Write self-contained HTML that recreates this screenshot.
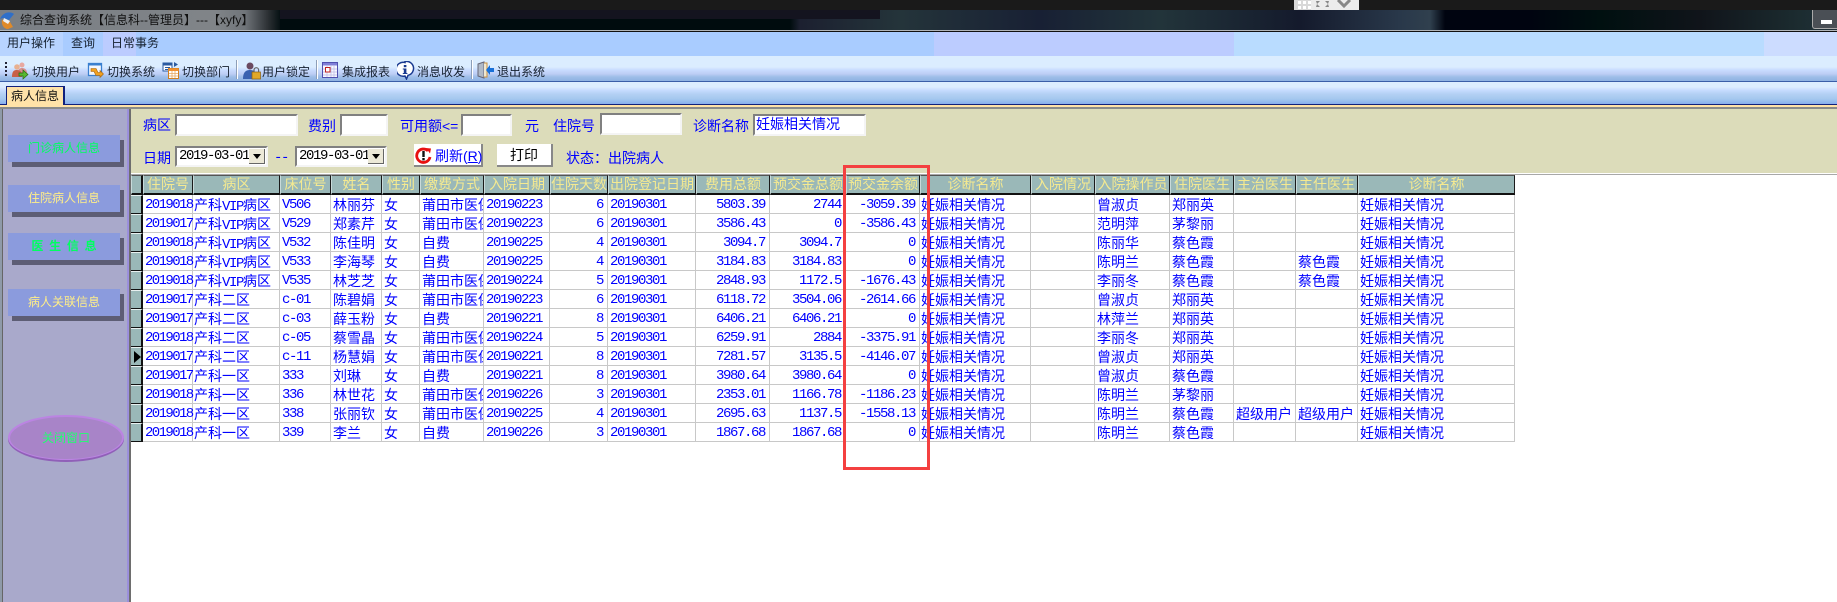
<!DOCTYPE html>
<html lang="zh"><head><meta charset="utf-8"><title>综合查询系统</title>
<style>
*{box-sizing:border-box}
html,body{margin:0;padding:0;width:1837px;height:602px;overflow:hidden;background:#fff}
body{position:relative;font-family:"Liberation Sans","WenQuanYi Zen Hei","Noto Sans CJK SC",sans-serif;font-size:12px;color:#111}
.a{position:absolute}
.t{position:absolute;white-space:nowrap;line-height:16px}
.band{position:absolute;top:32px;height:24px}
.tb{position:absolute;top:64px;line-height:16px;white-space:nowrap;color:#15202f}
.ic{position:absolute;top:61px;width:18px;height:19px}
.sep{position:absolute;top:60px;height:19px;background:#8d9fb8;border-right:1px solid #fff;width:2px}
.l{position:absolute;color:#00f;font-size:14px;line-height:16px;white-space:nowrap}
.inp{position:absolute;background:#fff;border:2px solid;border-color:#808080 #f4f4f4 #f4f4f4 #808080;outline:0}
.sel{position:absolute;height:21px;background:#fff;border:2px solid;border-color:#808080 #f4f4f4 #f4f4f4 #808080;font-family:"Liberation Mono",monospace;font-size:14px;letter-spacing:-1.4px;line-height:17px;padding-left:2px;color:#000}
.sel i{position:absolute;right:1px;top:1px;width:16px;height:15px;background:#ece9d8;border-right:1px solid #666;border-bottom:1px solid #666}
.sel i:after{content:"";position:absolute;left:4px;top:5px;border:4px solid transparent;border-top:5px solid #000;border-bottom:0}
.btn{position:absolute;left:8px;width:112px;height:27px;background:#8b9bdd;box-shadow:4px 5px 0 #5d5d75;font-size:12px;line-height:27px;text-align:center;white-space:nowrap}
table{position:absolute;left:131px;top:175px;border-collapse:separate;border-spacing:0;table-layout:fixed;width:1384px;font-size:14px;color:#00f;background:#fff;font-family:"WenQuanYi Zen Hei","Noto Sans CJK SC",sans-serif}
th{height:20px;padding:0;background:#9ab8b8;color:#f5ea90;font-weight:normal;border-top:1px solid #555;border-left:1px solid #c8dada;border-right:1px solid #1a1a1a;border-bottom:2px solid #111;overflow:hidden;white-space:nowrap;line-height:17px;text-align:center}
td{height:19px;padding:2px 0 0 2px;border-right:1px solid #c8c8c8;border-bottom:1px solid #c8c8c8;overflow:hidden;white-space:nowrap;line-height:16px;background:#fff}
td.s{background:#9ab8b8;border-right:2px solid #111;border-bottom:1px solid #111;border-top:1px solid #e8f0f0;padding:0;position:relative}
td.n,td.r{font-family:"Liberation Mono",monospace;letter-spacing:-1.4px}
td.r{text-align:right;padding:2px 4px 0 0}
td.k{padding-left:1px}
td.n.k{padding-left:2px;letter-spacing:-1.6px;overflow:visible}
i.v{font-style:normal;font-family:"Liberation Mono",monospace;letter-spacing:-1.4px;line-height:0}
</style></head><body>

<!-- top black -->
<div class="a" style="left:0;top:0;width:1837px;height:10px;background:#1a1a1a"></div>
<div class="a" style="left:1294px;top:0;width:65px;height:13px;background:#ececec"></div>
<div class="a" style="left:1294px;top:0;width:17px;height:13px;background:#d8d8d8"></div>
<svg class="a" style="left:1296px;top:0" width="62" height="12"><g fill="#fff"><rect x="2" y="1" width="3" height="3"/><rect x="7" y="1" width="3" height="3"/><rect x="12" y="1" width="3" height="3"/><rect x="2" y="6" width="3" height="3"/><rect x="7" y="6" width="3" height="3"/><rect x="12" y="6" width="3" height="3"/></g><path d="M20 1h4l-3 3zM33 1h-4l3 3zM20 7h4l-3-3zM33 7h-4l3-3z" fill="#888"/><path d="M42 0l6 6 6-6" stroke="#888" stroke-width="3" fill="none"/></svg>

<!-- title bar -->
<div class="a" style="left:0;top:10px;width:1837px;height:20px;background:linear-gradient(90deg,#000c0e 0,#000c0e 790px,#1c2030 800px,#24343a 900px,#182034 1040px,#22343a 1160px,#141a2c 1300px,#29384a 1400px,#30404e 1430px,#000410 1445px,#000410 1530px,#001010 1600px,#10141a 1700px,#1c2c30 1800px,#20303a 1837px)"></div>
<div class="a" style="left:0;top:10px;width:280px;height:20px;background:linear-gradient(90deg,#7a7f85 0,#808488 215px,#70757a 245px,#2c3034 268px,#000c0e 282px)"></div>
<div class="a" style="left:280px;top:10px;width:600px;height:9px;background:#14141f"></div>
<div class="a" style="left:1812px;top:10px;width:25px;height:19px;background:#4a4f55;border:1px solid #aaa;border-right:0;border-top:0;border-radius:0 0 0 3px"></div>
<div class="a" style="left:1821px;top:20px;width:11px;height:4px;background:#fff"></div>
<svg class="a" style="left:0;top:11px" width="16" height="19"><path d="M0 8C3 1 10 0 14 3L9 9 3 7z" fill="#2f6fc8"/><path d="M2 9l8 2 3 5-5 2C4 18 1 14 2 9z" fill="#e08a28"/><path d="M4 7l6 3-2 3-5-3z" fill="#f0f0f0"/></svg>
<div class="t" style="left:20px;top:12px;color:#101010">综合查询系统【信息科--管理员】---【xyfy】</div>
<div class="a" style="left:0;top:30px;width:1837px;height:1px;background:#b0b4b8"></div>
<div class="a" style="left:0;top:31px;width:1837px;height:1px;background:#111"></div>

<!-- menu -->
<div class="band" style="left:0;width:63px;background:#b8d4ff"></div>
<div class="band" style="left:63px;width:40px;background:#a9ccff"></div>
<div class="band" style="left:103px;width:33px;background:#bcccff"></div>
<div class="band" style="left:136px;width:798px;background:#a9ccff"></div>
<div class="band" style="left:934px;width:300px;background:#bcccff"></div>
<div class="band" style="left:1234px;width:530px;background:#b9dcff"></div>
<div class="band" style="left:1764px;width:73px;background:#ccdcff"></div>
<div class="t" style="left:7px;top:35px;color:#15202f">用户操作</div>
<div class="t" style="left:71px;top:35px;color:#15202f">查询</div>
<div class="t" style="left:111px;top:35px;color:#15202f">日常事务</div>

<!-- toolbar -->
<div class="a" style="left:0;top:56px;width:1837px;height:25px;background:linear-gradient(180deg,#dbedff 0,#dbedff 11px,#c8dcff 14px,#bccdf4 18px,#9dbde8 21px,#8fb2e2 25px)"></div>
<div class="a" style="left:0;top:81px;width:1837px;height:1px;background:#3a5ea8"></div>
<div class="a" style="left:5px;top:62px;width:2px;height:16px;background:repeating-linear-gradient(180deg,#223 0,#223 2px,transparent 2px,transparent 4px)"></div>

<svg class="ic" style="left:11px"><circle cx="11" cy="4" r="2.500" fill="#e8a8a0"/><path d="M7 12c0-4 2-5 4-5s5 1 5 5z" fill="#d89090"/><circle cx="6" cy="6" r="2.800" fill="#e8b090"/><path d="M1 16c0-6 2-7 5-7s5 2 5 5v2z" fill="#c86048"/><path d="M8 12h4V9l5 4.500-5 4.500v-3H8z" fill="#58b830" stroke="#2a6a10" stroke-width=".7"/></svg>
<div class="tb" style="left:32px">切换用户</div>
<svg class="ic" style="left:87px"><rect x="1.500" y="2.500" width="13" height="12" fill="#f4f8ff" stroke="#3a80d0" stroke-width="1.300"/><rect x="1" y="2" width="14" height="2.500" fill="#3a80d0"/><path d="M4 7.500h5l2 4h2v-2l3.500 3.500-3.500 3.500v-2H9l-2-4H4z" fill="#f0a020" stroke="#a06010" stroke-width=".6"/></svg>
<div class="tb" style="left:107px">切换系统</div>
<svg class="ic" style="left:162px"><rect x="1" y="2" width="9" height="8" fill="#fff" stroke="#2a5aa0"/><rect x="1" y="2" width="9" height="2.500" fill="#2a5aa0"/><path d="M3 6.500h5M3 8.500h3" stroke="#2a5aa0"/><rect x="6.500" y="7.500" width="10" height="10" fill="#fff" stroke="#d08020"/><rect x="6.500" y="7.500" width="10" height="2.500" fill="#f09030"/><path d="M7 12.500h9M7 15h9M10 10v7M13 10v7" stroke="#e8a860" stroke-width=".8"/><path d="M12 1l4 2.500-4 2.500z" fill="#2a5aa0"/></svg>
<div class="tb" style="left:182px">切换部门</div>
<div class="sep" style="left:236px"></div>
<svg class="ic" style="left:243px"><circle cx="7" cy="5" r="3.500" fill="#6a4a60"/><path d="M0 18c0-7 3-9 7-9s6 2 6 5v4z" fill="#3a62b0"/><rect x="9" y="11" width="8.500" height="7" fill="#e0a828" stroke="#8a6010" stroke-width=".7"/><path d="M11 11V9a2.300 2.300 0 014.600 0v2" fill="none" stroke="#666" stroke-width="1.200"/></svg>
<div class="tb" style="left:262px">用户锁定</div>
<div class="sep" style="left:316px"></div>
<svg class="ic" style="left:322px"><rect x=".5" y="1.500" width="15" height="15" fill="#f8f8ff" stroke="#5050b0"/><rect x="1" y="2" width="14" height="2.500" fill="#8080d8"/><path d="M1 8h14M1 11h14M1 14h14M5 4v12M9 4v12M12 4v12" stroke="#b8b8e4" stroke-width=".7"/><rect x="3.500" y="6.500" width="4.500" height="4.500" fill="#fff" stroke="#c02020"/></svg>
<div class="tb" style="left:342px">集成报表</div>
<svg class="ic" style="left:397px"><path d="M8 1.500a7 7 0 100 13.500l1.500 3 1.500-3.700a7 7 0 00-3-13.800z" fill="#fff" stroke="#1a3a90" stroke-width="1.500"/><rect x="6.800" y="4" width="2.600" height="2.200" fill="#1a3a90"/><path d="M5.800 7.500h3.600v4.500h1v1H5.800v-1h1V8.500h-1z" fill="#1a3a90"/></svg>
<div class="tb" style="left:417px">消息收发</div>
<div class="sep" style="left:471px"></div>
<svg class="ic" style="left:477px"><path d="M1 3l6-2v16l-6-2z" fill="#b0bac8" stroke="#667"/><path d="M7 2h3v14H7" fill="#f0e8d0" stroke="#c89040"/><path d="M17 7h-4V4L9 9l4 5v-3h4z" fill="#1870d8"/></svg>
<div class="tb" style="left:497px">退出系统</div>

<!-- tab strip -->
<div class="a" style="left:0;top:82px;width:1837px;height:22px;background:linear-gradient(180deg,#dcedff 0,#dcedff 5px,#c8dcff 8px,#b4d0f4 12px,#a4c8ee 17px,#88aeee 22px)"></div>
<div class="a" style="left:0;top:104px;width:1837px;height:1px;background:#10207c"></div>
<div class="a" style="left:0;top:105px;width:1837px;height:2px;background:#ffe2a8"></div>
<div class="a" style="left:0;top:107px;width:1837px;height:2px;background:#8a8a8a"></div>
<div class="a" style="left:6px;top:86px;width:59px;height:19px;background:#ffe2a8;border:1px solid #10207c;border-bottom:0;border-right:2px solid #10207c"></div>
<div class="t" style="left:11px;top:88px;font-size:12px;color:#111">病人信息</div>

<!-- left panel -->
<div class="a" style="left:0;top:109px;width:3px;height:493px;background:#8f9aa8;border-right:1px solid #666"></div>
<div class="a" style="left:3px;top:109px;width:125px;height:493px;background:#a9a9cb"></div>
<div class="a" style="left:127px;top:109px;width:2px;height:493px;background:#9b8fdc"></div>
<div class="a" style="left:129px;top:109px;width:2px;height:493px;background:#6e6e6e"></div>
<div class="btn" style="top:135px;color:#00ff60">门诊病人信息</div>
<div class="btn" style="top:185px;color:#ffee88">住院病人信息</div>
<div class="btn" style="top:233px;color:#00ff60;word-spacing:2.400px;font-weight:bold">医 生 信 息</div>
<div class="btn" style="top:289px;color:#ffee88">病人关联信息</div>
<svg class="a" style="left:7px;top:414px" width="120" height="50"><ellipse cx="59" cy="25" rx="58" ry="23" fill="#9060b8"/><ellipse cx="59" cy="23.500" rx="58" ry="22.500" fill="#bb84e2"/><ellipse cx="59" cy="24" rx="56" ry="21" fill="#a884c8"/></svg>
<div class="a" style="left:8px;top:430px;width:116px;text-align:center;font-size:12px;line-height:16px;color:#20ff70">关闭窗口</div>

<!-- form -->
<div class="a" style="left:131px;top:109px;width:1706px;height:64px;background:#dcdcba"></div>
<div class="a" style="left:131px;top:173px;width:1706px;height:1px;background:#fff"></div>
<div class="a" style="left:131px;top:174px;width:1706px;height:1px;background:#a8a8a8"></div>

<div class="l" style="left:143px;top:117px">病区</div>
<div class="inp" style="left:175px;top:114px;width:123px;height:22px"></div>
<div class="l" style="left:308px;top:118px">费别</div>
<div class="inp" style="left:340px;top:114px;width:48px;height:22px"></div>
<div class="l" style="left:400px;top:118px">可用额&lt;=</div>
<div class="inp" style="left:461px;top:114px;width:51px;height:22px"></div>
<div class="l" style="left:525px;top:118px">元</div>
<div class="l" style="left:553px;top:118px">住院号</div>
<div class="inp" style="left:600px;top:113px;width:82px;height:22px"></div>
<div class="l" style="left:693px;top:118px">诊断名称</div>
<div class="inp" style="left:753px;top:114px;width:113px;height:22px;color:#00f;font-size:14px;line-height:17px;padding-left:1px;white-space:nowrap">妊娠相关情况</div>

<div class="l" style="left:143px;top:150px">日期</div>
<div class="sel" style="left:175px;top:146px;width:93px">2019-03-01<i></i></div>
<div class="l" style="left:274px;top:150px;font-family:'Liberation Mono',monospace;letter-spacing:-1.400px">--</div>
<div class="sel" style="left:295px;top:146px;width:92px">2019-03-01<i></i></div>

<div class="a" style="left:414px;top:144px;width:69px;height:23px;background:#fff;border-right:2px solid #888;border-bottom:2px solid #888"></div>
<svg class="a" style="left:415px;top:147px" width="17" height="17"><path d="M13 3.800A6.700 6.700 0 1015 10" fill="none" stroke="#e81010" stroke-width="2.800"/><path d="M11 1l5 .5-1 5z" fill="#e81010"/><rect x="7.300" y="4" width="2.400" height="6" fill="#111"/><rect x="7.300" y="11" width="2.400" height="2.400" fill="#111"/></svg>
<div class="l" style="left:435px;top:148px">刷新(<u>R</u>)</div>
<div class="a" style="left:497px;top:144px;width:56px;height:23px;background:#fff;border-right:2px solid #888;border-bottom:2px solid #888"></div>
<div class="a" style="left:497px;top:147px;width:54px;text-align:center;font-size:14px;line-height:16px;color:#000">打印</div>
<div class="l" style="left:566px;top:150px">状态：出院病人</div>

<!-- grid -->
<table>
<colgroup><col style="width:12px"><col style="width:50px"><col style="width:87px"><col style="width:51px"><col style="width:51px"><col style="width:38px"><col style="width:64px"><col style="width:66px"><col style="width:58px"><col style="width:88px"><col style="width:74px"><col style="width:76px"><col style="width:74px"><col style="width:111px"><col style="width:64px"><col style="width:75px"><col style="width:64px"><col style="width:62px"><col style="width:62px"><col style="width:157px"></colgroup>
<tr><th style="border-right:2px solid #111"></th><th>住院号</th><th>病区</th><th>床位号</th><th>姓名</th><th>性别</th><th>缴费方式</th><th>入院日期</th><th>住院天数</th><th>出院登记日期</th><th>费用总额</th><th>预交金总额</th><th>预交金余额</th><th>诊断名称</th><th>入院情况</th><th>入院操作员</th><th>住院医生</th><th>主治医生</th><th>主任医生</th><th>诊断名称</th></tr>
<tr><td class="s"></td><td class="n k">2019018</td><td class="k">产科<i class="v">VIP</i>病区</td><td class="n">V506</td><td>林丽芬</td><td>女</td><td>莆田市医保</td><td class="n">20190223</td><td class="r">6</td><td class="n">20190301</td><td class="r">5803.39</td><td class="r">2744</td><td class="r">-3059.39</td><td class="k">妊娠相关情况</td><td></td><td>曾淑贞</td><td>郑丽英</td><td></td><td></td><td>妊娠相关情况</td></tr>
<tr><td class="s"></td><td class="n k">2019017</td><td class="k">产科<i class="v">VIP</i>病区</td><td class="n">V529</td><td>郑素芹</td><td>女</td><td>莆田市医保</td><td class="n">20190223</td><td class="r">6</td><td class="n">20190301</td><td class="r">3586.43</td><td class="r">0</td><td class="r">-3586.43</td><td class="k">妊娠相关情况</td><td></td><td>范明萍</td><td>茅黎丽</td><td></td><td></td><td>妊娠相关情况</td></tr>
<tr><td class="s"></td><td class="n k">2019018</td><td class="k">产科<i class="v">VIP</i>病区</td><td class="n">V532</td><td>陈佳明</td><td>女</td><td>自费</td><td class="n">20190225</td><td class="r">4</td><td class="n">20190301</td><td class="r">3094.7</td><td class="r">3094.7</td><td class="r">0</td><td class="k">妊娠相关情况</td><td></td><td>陈丽华</td><td>蔡色霞</td><td></td><td></td><td>妊娠相关情况</td></tr>
<tr><td class="s"></td><td class="n k">2019018</td><td class="k">产科<i class="v">VIP</i>病区</td><td class="n">V533</td><td>李海琴</td><td>女</td><td>自费</td><td class="n">20190225</td><td class="r">4</td><td class="n">20190301</td><td class="r">3184.83</td><td class="r">3184.83</td><td class="r">0</td><td class="k">妊娠相关情况</td><td></td><td>陈明兰</td><td>蔡色霞</td><td></td><td>蔡色霞</td><td>妊娠相关情况</td></tr>
<tr><td class="s"></td><td class="n k">2019018</td><td class="k">产科<i class="v">VIP</i>病区</td><td class="n">V535</td><td>林芝芝</td><td>女</td><td>莆田市医保</td><td class="n">20190224</td><td class="r">5</td><td class="n">20190301</td><td class="r">2848.93</td><td class="r">1172.5</td><td class="r">-1676.43</td><td class="k">妊娠相关情况</td><td></td><td>李丽冬</td><td>蔡色霞</td><td></td><td>蔡色霞</td><td>妊娠相关情况</td></tr>
<tr><td class="s"></td><td class="n k">2019017</td><td class="k">产科二区</td><td class="n">c-01</td><td>陈碧娟</td><td>女</td><td>莆田市医保</td><td class="n">20190223</td><td class="r">6</td><td class="n">20190301</td><td class="r">6118.72</td><td class="r">3504.06</td><td class="r">-2614.66</td><td class="k">妊娠相关情况</td><td></td><td>曾淑贞</td><td>郑丽英</td><td></td><td></td><td>妊娠相关情况</td></tr>
<tr><td class="s"></td><td class="n k">2019017</td><td class="k">产科二区</td><td class="n">c-03</td><td>薛玉粉</td><td>女</td><td>自费</td><td class="n">20190221</td><td class="r">8</td><td class="n">20190301</td><td class="r">6406.21</td><td class="r">6406.21</td><td class="r">0</td><td class="k">妊娠相关情况</td><td></td><td>林萍兰</td><td>郑丽英</td><td></td><td></td><td>妊娠相关情况</td></tr>
<tr><td class="s"></td><td class="n k">2019018</td><td class="k">产科二区</td><td class="n">c-05</td><td>蔡雪晶</td><td>女</td><td>莆田市医保</td><td class="n">20190224</td><td class="r">5</td><td class="n">20190301</td><td class="r">6259.91</td><td class="r">2884</td><td class="r">-3375.91</td><td class="k">妊娠相关情况</td><td></td><td>李丽冬</td><td>郑丽英</td><td></td><td></td><td>妊娠相关情况</td></tr>
<tr><td class="s"><svg style="position:absolute;left:3px;top:3px" width="7" height="12"><path d="M0 0l7 6-7 6z" fill="#000"/></svg></td><td class="n k">2019017</td><td class="k">产科二区</td><td class="n">c-11</td><td>杨慧娟</td><td>女</td><td>莆田市医保</td><td class="n">20190221</td><td class="r">8</td><td class="n">20190301</td><td class="r">7281.57</td><td class="r">3135.5</td><td class="r">-4146.07</td><td class="k">妊娠相关情况</td><td></td><td>曾淑贞</td><td>郑丽英</td><td></td><td></td><td>妊娠相关情况</td></tr>
<tr><td class="s"></td><td class="n k">2019017</td><td class="k">产科一区</td><td class="n">333</td><td>刘琳</td><td>女</td><td>自费</td><td class="n">20190221</td><td class="r">8</td><td class="n">20190301</td><td class="r">3980.64</td><td class="r">3980.64</td><td class="r">0</td><td class="k">妊娠相关情况</td><td></td><td>曾淑贞</td><td>蔡色霞</td><td></td><td></td><td>妊娠相关情况</td></tr>
<tr><td class="s"></td><td class="n k">2019018</td><td class="k">产科一区</td><td class="n">336</td><td>林世花</td><td>女</td><td>莆田市医保</td><td class="n">20190226</td><td class="r">3</td><td class="n">20190301</td><td class="r">2353.01</td><td class="r">1166.78</td><td class="r">-1186.23</td><td class="k">妊娠相关情况</td><td></td><td>陈明兰</td><td>茅黎丽</td><td></td><td></td><td>妊娠相关情况</td></tr>
<tr><td class="s"></td><td class="n k">2019018</td><td class="k">产科一区</td><td class="n">338</td><td>张丽钦</td><td>女</td><td>莆田市医保</td><td class="n">20190225</td><td class="r">4</td><td class="n">20190301</td><td class="r">2695.63</td><td class="r">1137.5</td><td class="r">-1558.13</td><td class="k">妊娠相关情况</td><td></td><td>陈明兰</td><td>蔡色霞</td><td>超级用户</td><td>超级用户</td><td>妊娠相关情况</td></tr>
<tr><td class="s"></td><td class="n k">2019018</td><td class="k">产科一区</td><td class="n">339</td><td>李兰</td><td>女</td><td>自费</td><td class="n">20190226</td><td class="r">3</td><td class="n">20190301</td><td class="r">1867.68</td><td class="r">1867.68</td><td class="r">0</td><td class="k">妊娠相关情况</td><td></td><td>陈明兰</td><td>蔡色霞</td><td></td><td></td><td>妊娠相关情况</td></tr>
</table>

<!-- red annotation -->
<div class="a" style="left:843px;top:165px;width:87px;height:305px;border:3px solid #f44040"></div>
</body></html>
